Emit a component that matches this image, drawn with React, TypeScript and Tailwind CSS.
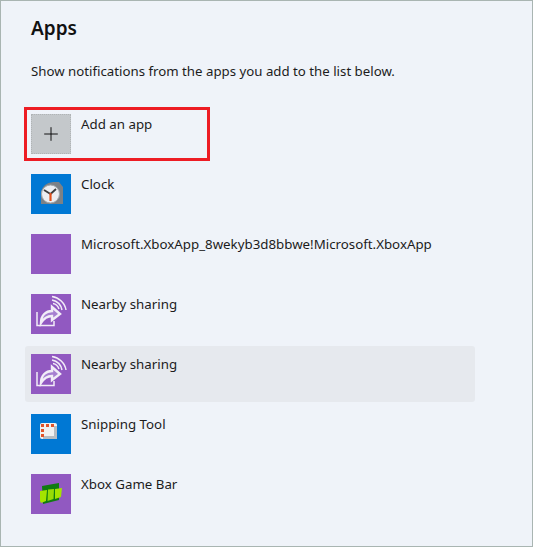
import { Plus } from 'lucide-react';

const font = { fontFamily: '"Noto Sans", sans-serif' };

function ClockIcon() {
  return (
    <svg viewBox="0 0 40 40" className="w-10 h-10">
      <path d="M10 30 L10 18 Q12 9 22 8 L28 8 L32 13 L32 30 Z" fill="#7b8186" />
      <circle cx="19.5" cy="20" r="9" fill="#eceef1" stroke="#a3a8ac" strokeWidth="1" />
      <path d="M19.5 20 L13 16 M19.5 20 L25 15" stroke="#3b3b3b" strokeWidth="1.8" fill="none" />
      <path d="M19.5 19 L19.5 27" stroke="#e2521d" strokeWidth="2.2" />
    </svg>
  );
}

function ShareIcon() {
  return (
    <svg viewBox="0 0 40 40" fill="none" className="w-10 h-10">
      <path d="M6 18 L6 31.5 L23 31.5 L23 27" stroke="#f1ecf7" strokeWidth="1.5" />
      <path d="M10 29 C10 21 15 17 21 17 L21 13 L29 20 L21 26 L21 22 C17 22 13 24 10 29 Z" stroke="#f1ecf7" strokeWidth="2.4" fill="#a67fd0" />
      <path d="M21 6 C26 7 30 11 31 16 M21 2.5 C28 3.5 34 9 35 16 M22 9.5 C25 10 27 12 28 15" stroke="#f1ecf7" strokeWidth="1.5" />
    </svg>
  );
}

function SnipIcon() {
  return (
    <svg viewBox="0 0 40 40" className="w-10 h-10">
      <rect x="9" y="9" width="17" height="16" rx="2" fill="#f2f2f2" />
      <path d="M23 12 H26 V25 H12 V22 H23 Z" fill="#b9bdc2" />
      <rect x="10" y="10" width="3" height="3" fill="#e2552b" />
      <rect x="15" y="10" width="3" height="3" fill="#e2552b" />
      <rect x="20" y="10" width="3" height="3" fill="#e2552b" />
      <rect x="10" y="15" width="3" height="3" fill="#e2552b" />
      <rect x="10" y="20" width="3" height="3" fill="#e2552b" />
    </svg>
  );
}

function GameBarIcon() {
  return (
    <svg viewBox="0 0 40 40" className="w-10 h-10">
      <path d="M11 12 L28 9 L28 26 L12 30 Z" fill="#107c10" />
      <path d="M9 17 L16 16 L15 27 L10 29 L9 27 Z" fill="#a4e400" />
      <path d="M17 15.5 L23 15 L22.5 25 L16.5 27 Z" fill="#96dc06" />
      <path d="M24 15 L31 14 L30 23 L24 25 Z" fill="#a4e400" />
    </svg>
  );
}

function AppRow({ name, bg, icon, hover }: { name: string; bg: string; icon?: React.ReactNode; hover?: boolean }) {
  return (
    <div className={`flex w-[450px] h-14 items-center gap-2.5 pl-1.5 rounded-[3px] ${hover ? 'bg-[#e6e9ee]' : ''}`}>
      <div className={`w-10 h-10 shrink-0 flex items-center justify-center ${bg}`}>{icon}</div>
      <div className="self-start pt-2 text-[13.3px] leading-[20px] text-[#1c1c1c]">{name}</div>
    </div>
  );
}

export default function App() {
  return (
    <div className="w-[533px] h-[547px] bg-[#eff3f9] border border-[#a9b5b2] overflow-hidden relative" style={font}>
      <div className="pl-[24px] pt-[13px]">
        <h1 className="pl-1.5 text-[19px] leading-[28px] font-semibold text-[#111]">Apps</h1>
        <p className="pl-1.5 mt-[19px] text-[13.25px] leading-[20px] text-[#1c1c1c]">
          Show notifications from the apps you add to the list below.
        </p>
        <div className="mt-[25px] flex flex-col gap-1">
          <AppRow name="Add an app" bg="bg-[#c4c8cb] border border-dotted border-[#b0b4b6]" icon={<Plus size={22} strokeWidth={1} color="#000" />} />
          <AppRow name="Clock" bg="bg-[#0078d4]" icon={<ClockIcon />} />
          <AppRow name="Microsoft.XboxApp_8wekyb3d8bbwe!Microsoft.XboxApp" bg="bg-[#9159c1]" />
          <AppRow name="Nearby sharing" bg="bg-[#9159c1]" icon={<ShareIcon />} />
          <AppRow name="Nearby sharing" bg="bg-[#9159c1]" icon={<ShareIcon />} hover />
          <AppRow name="Snipping Tool" bg="bg-[#0078d4]" icon={<SnipIcon />} />
          <AppRow name="Xbox Game Bar" bg="bg-[#9159c1]" icon={<GameBarIcon />} />
        </div>
      </div>
      {/* red annotation box */}
      <div className="absolute left-[23px] top-[106px] w-[186px] h-[54px] border-[3px] border-[#ed1c24]" />
    </div>
  );
}
